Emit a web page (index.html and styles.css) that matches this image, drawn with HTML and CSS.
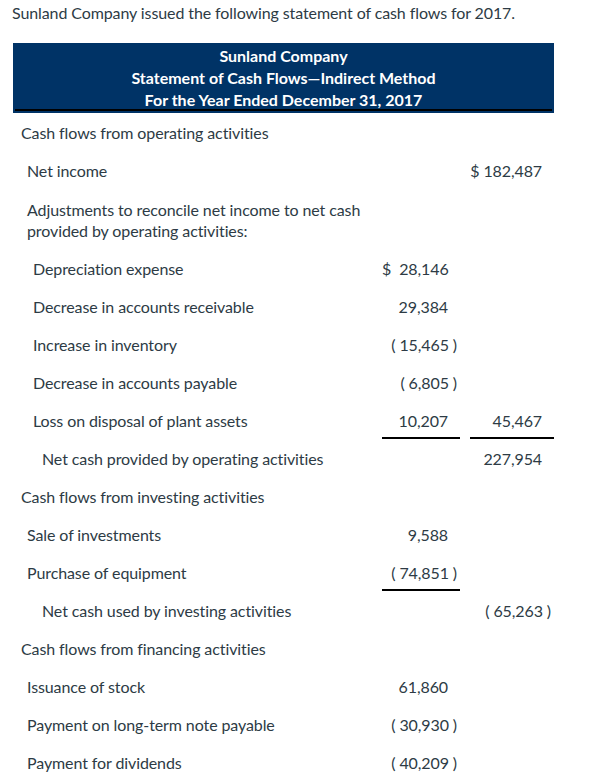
FILE: index.html
```html
<!DOCTYPE html>
<html lang="en">
<head>
<meta charset="utf-8">
<title>Sunland Company Statement of Cash Flows</title>
<link rel="stylesheet" href="styles.css">
</head>
<body>
<p class="intro">Sunland Company issued the following statement of cash flows for 2017.</p>
<div class="statement">
  <div class="head">
    <div class="head-inner">
      <div>Sunland Company</div>
      <div>Statement of Cash Flows—Indirect Method</div>
      <div>For the Year Ended December 31, 2017</div>
    </div>
  </div>
  <div class="rows">
    <div class="row"><div class="lbl l0">Cash flows from operating activities</div><div class="c1"></div><div class="c2"></div></div>
    <div class="row"><div class="lbl l1">Net income</div><div class="c1"></div><div class="c2">$ 182,487</div></div>
    <div class="row"><div class="lbl l1 adj">Adjustments to reconcile net income to net cash provided by operating activities:</div><div class="c1"></div><div class="c2"></div></div>
    <div class="row"><div class="lbl l2">Depreciation expense</div><div class="c1">$&nbsp; 28,146</div><div class="c2"></div></div>
    <div class="row"><div class="lbl l2">Decrease in accounts receivable</div><div class="c1">29,384</div><div class="c2"></div></div>
    <div class="row"><div class="lbl l2">Increase in inventory</div><div class="c1 neg">( 15,465 )</div><div class="c2"></div></div>
    <div class="row"><div class="lbl l2">Decrease in accounts payable</div><div class="c1 neg">( 6,805 )</div><div class="c2"></div></div>
    <div class="row"><div class="lbl l2">Loss on disposal of plant assets</div><div class="c1 ul">10,207</div><div class="c2 ul">45,467</div></div>
    <div class="row"><div class="lbl l3">Net cash provided by operating activities</div><div class="c1"></div><div class="c2">227,954</div></div>
    <div class="row"><div class="lbl l0">Cash flows from investing activities</div><div class="c1"></div><div class="c2"></div></div>
    <div class="row"><div class="lbl l1">Sale of investments</div><div class="c1">9,588</div><div class="c2"></div></div>
    <div class="row"><div class="lbl l1">Purchase of equipment</div><div class="c1 neg ul">( 74,851 )</div><div class="c2"></div></div>
    <div class="row"><div class="lbl l3">Net cash used by investing activities</div><div class="c1"></div><div class="c2 neg">( 65,263 )</div></div>
    <div class="row"><div class="lbl l0">Cash flows from financing activities</div><div class="c1"></div><div class="c2"></div></div>
    <div class="row"><div class="lbl l1">Issuance of stock</div><div class="c1">61,860</div><div class="c2"></div></div>
    <div class="row"><div class="lbl l1">Payment on long-term note payable</div><div class="c1 neg">( 30,930 )</div><div class="c2"></div></div>
    <div class="row"><div class="lbl l1">Payment for dividends</div><div class="c1 neg">( 40,209 )</div><div class="c2"></div></div>
  </div>
</div>
</body>
</html>
```
FILE: styles.css
```css
html, body {
  margin: 0;
  padding: 0;
  background: #ffffff;
}
body {
  font-family: Lato, "Open Sans", sans-serif;
  font-size: 16px;
  color: #2d3b45;
  overflow: hidden;
}
.intro {
  margin: 0;
  padding: 2px 0 0 12px;
  line-height: 21px;
  letter-spacing: -0.1px;
}
.statement {
  margin: 20px 0 0 13px;
  width: 541px;
}
.head {
  background: #003366;
  padding: 2px 2px 2px 2px;
}
.head-inner {
  border-bottom: 2px solid #000000;
  color: #ffffff;
  font-weight: bold;
  text-align: center;
  line-height: 22px;
  height: 64px;
}
.row {
  display: grid;
  grid-template-columns: 1fr 78px 84px;
  column-gap: 10px;
  letter-spacing: -0.1px;
}
.lbl, .c1, .c2 {
  padding: 9px 0 8px 0;
  line-height: 21px;
}
.adj { padding-top: 10px; }
.l0 { padding-left: 8px; }
.l1 { padding-left: 14px; }
.l2 { padding-left: 20px; }
.l3 { padding-left: 29px; }
.c1, .c2 {
  text-align: right;
  padding-right: 12px;
  white-space: nowrap;
}
.neg { padding-right: 3px; }
.ul { border-bottom: 2px solid #000000; padding-bottom: 6px; }
```
